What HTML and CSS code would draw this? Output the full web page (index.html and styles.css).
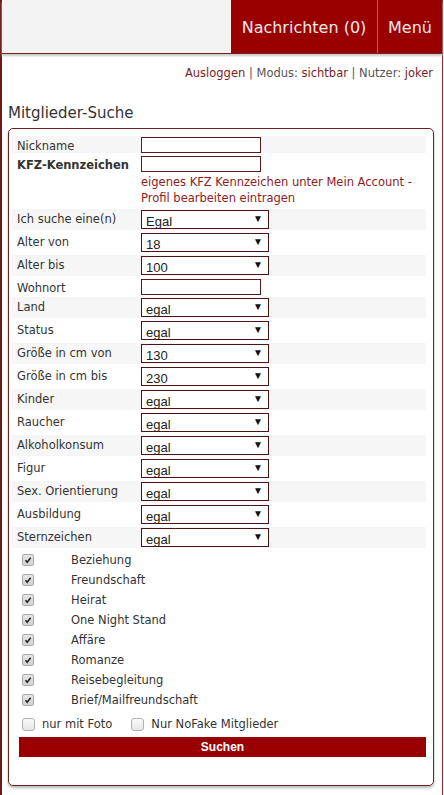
FILE: index.html
```html
<!DOCTYPE html>
<html lang="de">
<head>
<meta charset="utf-8">
<title>Mitglieder-Suche</title>
<link rel="stylesheet" href="styles.css">
</head>
<body>
<div class="page">
  <header class="header">
    <nav class="nav">
      <a class="nav-item nav-msg" href="#">Nachrichten (0)</a>
      <a class="nav-item nav-menu" href="#">Menü</a>
    </nav>
  </header>
  <main class="content">
    <div class="status">
      <a href="#">Ausloggen</a> <span class="sep">|</span> Modus: <a href="#">sichtbar</a> <span class="sep">|</span> Nutzer: <a href="#">joker</a>
    </div>
    <h1 class="title">Mitglieder-Suche</h1>
    <form class="box">
      <div class="rows">
        <div class="row row-text odd"><span class="lbl">Nickname</span><span class="fld"><span class="tinput"></span></span></div>
        <div class="row row-text"><span class="lbl bold">KFZ-Kennzeichen</span><span class="fld"><span class="tinput"></span><span class="note">eigenes KFZ Kennzeichen unter Mein Account - Profil bearbeiten eintragen</span></span></div>
        <div class="row odd"><span class="lbl">Ich suche eine(n)</span><span class="fld"><span class="sel">Egal<i class="arr">▼</i></span></span></div>
        <div class="row"><span class="lbl">Alter von</span><span class="fld"><span class="sel">18<i class="arr">▼</i></span></span></div>
        <div class="row odd"><span class="lbl">Alter bis</span><span class="fld"><span class="sel">100<i class="arr">▼</i></span></span></div>
        <div class="row row-text"><span class="lbl">Wohnort</span><span class="fld"><span class="tinput"></span></span></div>
        <div class="row odd"><span class="lbl">Land</span><span class="fld"><span class="sel">egal<i class="arr">▼</i></span></span></div>
        <div class="row"><span class="lbl">Status</span><span class="fld"><span class="sel">egal<i class="arr">▼</i></span></span></div>
        <div class="row odd"><span class="lbl">Größe in cm von</span><span class="fld"><span class="sel">130<i class="arr">▼</i></span></span></div>
        <div class="row"><span class="lbl">Größe in cm bis</span><span class="fld"><span class="sel">230<i class="arr">▼</i></span></span></div>
        <div class="row odd"><span class="lbl">Kinder</span><span class="fld"><span class="sel">egal<i class="arr">▼</i></span></span></div>
        <div class="row"><span class="lbl">Raucher</span><span class="fld"><span class="sel">egal<i class="arr">▼</i></span></span></div>
        <div class="row odd"><span class="lbl">Alkoholkonsum</span><span class="fld"><span class="sel">egal<i class="arr">▼</i></span></span></div>
        <div class="row"><span class="lbl">Figur</span><span class="fld"><span class="sel">egal<i class="arr">▼</i></span></span></div>
        <div class="row odd"><span class="lbl">Sex. Orientierung</span><span class="fld"><span class="sel">egal<i class="arr">▼</i></span></span></div>
        <div class="row"><span class="lbl">Ausbildung</span><span class="fld"><span class="sel">egal<i class="arr">▼</i></span></span></div>
        <div class="row odd"><span class="lbl">Sternzeichen</span><span class="fld"><span class="sel">egal<i class="arr">▼</i></span></span></div>
      </div>
      <ul class="checks">
        <li><span class="cb checked"><svg viewBox="0 0 12 12" width="12" height="12"><path d="M3 6.2 L5 8.6 L9.2 3.2" fill="none" stroke="#222" stroke-width="1.9"/></svg></span><span class="cl">Beziehung</span></li>
        <li><span class="cb checked"><svg viewBox="0 0 12 12" width="12" height="12"><path d="M3 6.2 L5 8.6 L9.2 3.2" fill="none" stroke="#222" stroke-width="1.9"/></svg></span><span class="cl">Freundschaft</span></li>
        <li><span class="cb checked"><svg viewBox="0 0 12 12" width="12" height="12"><path d="M3 6.2 L5 8.6 L9.2 3.2" fill="none" stroke="#222" stroke-width="1.9"/></svg></span><span class="cl">Heirat</span></li>
        <li><span class="cb checked"><svg viewBox="0 0 12 12" width="12" height="12"><path d="M3 6.2 L5 8.6 L9.2 3.2" fill="none" stroke="#222" stroke-width="1.9"/></svg></span><span class="cl">One Night Stand</span></li>
        <li><span class="cb checked"><svg viewBox="0 0 12 12" width="12" height="12"><path d="M3 6.2 L5 8.6 L9.2 3.2" fill="none" stroke="#222" stroke-width="1.9"/></svg></span><span class="cl">Affäre</span></li>
        <li><span class="cb checked"><svg viewBox="0 0 12 12" width="12" height="12"><path d="M3 6.2 L5 8.6 L9.2 3.2" fill="none" stroke="#222" stroke-width="1.9"/></svg></span><span class="cl">Romanze</span></li>
        <li><span class="cb checked"><svg viewBox="0 0 12 12" width="12" height="12"><path d="M3 6.2 L5 8.6 L9.2 3.2" fill="none" stroke="#222" stroke-width="1.9"/></svg></span><span class="cl">Reisebegleitung</span></li>
        <li><span class="cb checked"><svg viewBox="0 0 12 12" width="12" height="12"><path d="M3 6.2 L5 8.6 L9.2 3.2" fill="none" stroke="#222" stroke-width="1.9"/></svg></span><span class="cl">Brief/Mailfreundschaft</span></li>
      </ul>
      <div class="opts">
        <span class="cb2"></span><span class="ol">nur mit Foto</span>
        <span class="cb2 gapl"></span><span class="ol">Nur NoFake Mitglieder</span>
      </div>
      <button class="btn" type="button">Suchen</button>
    </form>
  </main>
</div>
</body>
</html>
```

FILE: styles.css
```css
html, body {
  margin: 0;
  padding: 0;
  background: #f4f4f4;
}
body {
  font-family: "DejaVu Sans", Verdana, sans-serif;
  font-size: 11.5px;
  color: #333;
}
.page {
  width: 443px;
  min-height: 795px;
  box-sizing: border-box;
  border-left: 2px solid #6e1818;
  border-right: 1px solid #8a3030;
  background: #fff;
}
.header {
  height: 53px;
  background: #f3f3f3;
  border-bottom: 1px solid #7a2020;
  box-shadow: 0 2px 2px #c8c8c8;
  display: flex;
  justify-content: flex-end;
}
.nav {
  display: flex;
  height: 53px;
}
.nav-item {
  display: flex;
  align-items: center;
  justify-content: center;
  background: #990000;
  color: #f6e8e8;
  text-decoration: none;
  font-size: 16px;
  padding-top: 1px;
  box-sizing: border-box;
}
.nav-msg {
  width: 147px;
  border-right: 1px solid #c45a5a;
}
.nav-menu {
  width: 64px;
}
.content {
  padding: 0 0 10px 0;
}
.status {
  text-align: right;
  padding: 12px 9px 0 0;
  font-size: 11.5px;
  line-height: 14px;
  color: #555;
}
.status a {
  color: #7c1d1d;
  text-decoration: none;
}
.title {
  margin: 24px 0 0 6px;
  font-size: 15px;
  font-weight: normal;
  color: #333;
  line-height: 18px;
}
.box {
  margin: 6px 8px 0 6px;
  border: 1px solid #6e1f1f;
  border-radius: 5px;
  box-shadow: 0 2px 3px rgba(0,0,0,0.28);
  padding: 7px 7px 27px 3px;
  height: 658px;
  box-sizing: border-box;
}
.rows {
  display: flex;
  flex-direction: column;
  gap: 2px;
}
.row {
  display: flex;
  align-items: flex-start;
  min-height: 21px;
}
.row.odd {
  background: #f6f6f6;
}
.row-text {
  min-height: 17px;
}
.lbl {
  width: 129px;
  flex: none;
  padding-left: 5px;
  box-sizing: border-box;
  font-size: 11.5px;
  line-height: 14px;
  padding-top: 3px;
  color: #333;
  white-space: nowrap;
}
.lbl.bold {
  font-weight: bold;
}
.fld {
  display: flex;
  flex-direction: column;
  max-width: 280px;
}
.tinput {
  display: block;
  width: 120px;
  height: 16px;
  box-sizing: border-box;
  border: 1px solid #5e1a1a;
  background: #fff;
  margin-top: 1px;
}
.note {
  display: block;
  color: #8e1b24;
  font-size: 11.5px;
  line-height: 16px;
  margin-top: 2px;
  padding-bottom: 1px;
}
.sel {
  position: relative;
  display: block;
  width: 128px;
  height: 19px;
  box-sizing: border-box;
  border: 1px solid #4e1212;
  background: #fff;
  margin-top: 1px;
  font-family: "Liberation Sans", Arial, sans-serif;
  font-size: 13px;
  line-height: 21px;
  padding-left: 4px;
  color: #222;
}
.arr {
  position: absolute;
  right: 5px;
  top: 0;
  font-style: normal;
  font-size: 10px;
  line-height: 16px;
  color: #111;
}
.checks {
  list-style: none;
  margin: 2px 0 0 0;
  padding: 0;
}
.checks li {
  display: flex;
  align-items: center;
  height: 20px;
}
.cb {
  display: inline-flex;
  width: 12px;
  height: 12px;
  margin-left: 10px;
  box-sizing: border-box;
  border: 1px solid #a8a8a8;
  border-radius: 2px;
  background: linear-gradient(#e6e6e6, #d2d2d2);
  align-items: center;
  justify-content: center;
}
.cb svg {
  display: block;
}
.cl {
  margin-left: 37px;
  font-size: 11.5px;
  color: #333;
}
.opts {
  display: flex;
  align-items: center;
  height: 20px;
  margin-top: 4px;
}
.cb2 {
  display: inline-block;
  width: 13px;
  height: 13px;
  margin-left: 10px;
  box-sizing: border-box;
  border: 1px solid #b0b0b0;
  border-radius: 3px;
  background: linear-gradient(#fafafa, #e6e6e6);
}
.cb2.gapl {
  margin-left: 19px;
}
.ol {
  margin-left: 7px;
  font-size: 11.5px;
  color: #333;
}
.btn {
  display: block;
  width: 407px;
  height: 20px;
  margin: 3px 0 0 7px;
  border: 0;
  background: #990000;
  color: #fff;
  font-family: "Liberation Sans", Arial, sans-serif;
  font-weight: bold;
  font-size: 12px;
  padding: 0;
  cursor: pointer;
}
```
